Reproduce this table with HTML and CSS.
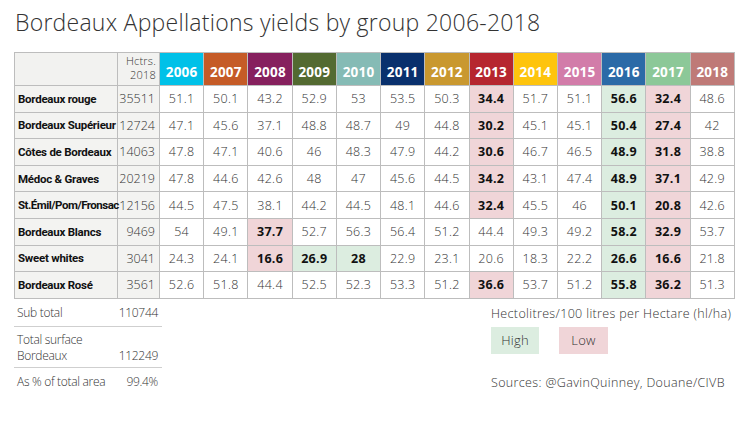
FILE: index.html
```html
<!DOCTYPE html>
<html>
<head>
<meta charset="utf-8">
<link rel="stylesheet" href="styles.css">
</head>
<body>
<div class="page">
  <h1 class="title">Bordeaux Appellations yields by group 2006-2018</h1>
  <table class="yields">
    <colgroup>
      <col class="c-name"><col class="c-ha">
      <col span="13" class="c-year">
    </colgroup>
    <thead>
      <tr>
        <th class="h-blank"></th>
        <th class="h-ha"><span class="hl">Hctrs.</span><span class="hl">2018</span></th>
        <th class="y06">2006</th><th class="y07">2007</th><th class="y08">2008</th><th class="y09">2009</th><th class="y10">2010</th><th class="y11">2011</th><th class="y12">2012</th><th class="y13">2013</th><th class="y14">2014</th><th class="y15">2015</th><th class="y16">2016</th><th class="y17">2017</th><th class="y18">2018</th>
      </tr>
    </thead>
    <tbody>
      <tr><td class="name">Bordeaux rouge</td><td class="ha">35511</td><td>51.1</td><td>50.1</td><td>43.2</td><td>52.9</td><td>53</td><td>53.5</td><td>50.3</td><td class="low">34.4</td><td>51.7</td><td>51.1</td><td class="high">56.6</td><td class="low">32.4</td><td>48.6</td></tr>
      <tr><td class="name">Bordeaux Supérieur</td><td class="ha">12724</td><td>47.1</td><td>45.6</td><td>37.1</td><td>48.8</td><td>48.7</td><td>49</td><td>44.8</td><td class="low">30.2</td><td>45.1</td><td>45.1</td><td class="high">50.4</td><td class="low">27.4</td><td>42</td></tr>
      <tr><td class="name">Côtes de Bordeaux</td><td class="ha">14063</td><td>47.8</td><td>47.1</td><td>40.6</td><td>46</td><td>48.3</td><td>47.9</td><td>44.2</td><td class="low">30.6</td><td>46.7</td><td>46.5</td><td class="high">48.9</td><td class="low">31.8</td><td>38.8</td></tr>
      <tr><td class="name">Médoc &amp; Graves</td><td class="ha">20219</td><td>47.8</td><td>44.6</td><td>42.6</td><td>48</td><td>47</td><td>45.6</td><td>44.5</td><td class="low">34.2</td><td>43.1</td><td>47.4</td><td class="high">48.9</td><td class="low">37.1</td><td>42.9</td></tr>
      <tr><td class="name narrow">St.Émil/Pom/Fronsac</td><td class="ha">12156</td><td>44.5</td><td>47.5</td><td>38.1</td><td>44.2</td><td>44.5</td><td>48.1</td><td>44.6</td><td class="low">32.4</td><td>45.5</td><td>46</td><td class="high">50.1</td><td class="low">20.8</td><td>42.6</td></tr>
      <tr><td class="name">Bordeaux Blancs</td><td class="ha">9469</td><td>54</td><td>49.1</td><td class="low">37.7</td><td>52.7</td><td>56.3</td><td>56.4</td><td>51.2</td><td>44.4</td><td>49.3</td><td>49.2</td><td class="high">58.2</td><td class="low">32.9</td><td>53.7</td></tr>
      <tr><td class="name">Sweet whites</td><td class="ha">3041</td><td>24.3</td><td>24.1</td><td class="low">16.6</td><td class="high">26.9</td><td class="high">28</td><td>22.9</td><td>23.1</td><td>20.6</td><td>18.3</td><td>22.2</td><td class="high">26.6</td><td class="low">16.6</td><td>21.8</td></tr>
      <tr><td class="name">Bordeaux Rosé</td><td class="ha">3561</td><td>52.6</td><td>51.8</td><td>44.4</td><td>52.5</td><td>52.3</td><td>53.3</td><td>51.2</td><td class="low">36.6</td><td>53.7</td><td>51.2</td><td class="high">55.8</td><td class="low">36.2</td><td>51.3</td></tr>
    </tbody>
  </table>
  <div class="bottom">
    <div class="totals">
      <div class="trow"><span>Sub total</span><span>110744</span></div>
      <div class="trow tall"><span class="two"><span class="tl">Total surface</span><span class="tl">Bordeaux</span></span><span>112249</span></div>
      <div class="trow last"><span>As % of total area</span><span>99.4%</span></div>
    </div>
    <div class="legend">
      <div class="unit">Hectolitres/100 litres per Hectare (hl/ha)</div>
      <div class="keys">
        <span class="key k-high">High</span>
        <span class="key k-low">Low</span>
      </div>
      <div class="sources">Sources: @GavinQuinney, Douane/CIVB</div>
    </div>
  </div>
</div>
</body>
</html>
```

FILE: styles.css
```css
html, body {
  margin: 0;
  padding: 0;
  background: #ffffff;
}
body {
  font-family: "Open Sans", "DejaVu Sans", sans-serif;
  color: #222;
}
.page {
  width: 750px;
  height: 422px;
  box-sizing: border-box;
  padding: 7px 16px 0 14px;
}
.title {
  margin: 0 0 0 1px;
  font-weight: 300;
  font-size: 23px;
  line-height: 31px;
  letter-spacing: 0.25px;
  color: #333;
  height: 45px;
}
.yields {
  border-collapse: collapse;
  table-layout: fixed;
  width: 720px;
  font-size: 12.5px;
}
.c-name { width: 103px; }
.c-ha { width: 42px; }
.c-year { width: 44.23px; }
.yields th, .yields td {
  border: 1px solid #bdbdbd;
  padding: 0;
}
.yields thead tr { height: 33px; }
.yields th {
  color: #fff;
  font-weight: 700;
  font-size: 13.5px;
  vertical-align: bottom;
  padding-bottom: 4px;
  text-align: center;
  letter-spacing: 0.2px;
}
.yields th.h-blank { background: #f2f2f0; }
.yields th.h-ha {
  background: #f2f2f0;
  color: #333;
  font-weight: 300;
  font-size: 11px;
  text-align: right;
  padding: 0 3px 3px 0;
}
.hl {
  display: block;
  line-height: 14px;
}
.y06 { background: #00c1e8; }
.y07 { background: #c55b27; }
.y08 { background: #86205e; }
.y09 { background: #536a31; }
.y10 { background: #85bbb5; }
.y11 { background: #09306d; }
.y12 { background: #c9982f; }
.y13 { background: #b6262f; }
.y14 { background: #fec40d; }
.y15 { background: #d27ca9; }
.y16 { background: #2b6aa7; }
.y17 { background: #8cc898; }
.y18 { background: #bf7a77; }
.yields tbody tr { height: 26.6px; }
.yields td {
  text-align: center;
  font-weight: 300;
  color: #333;
  letter-spacing: 0.3px;
}
.yields td.name {
  background: #f3f3f1;
  text-align: left;
  font-family: "Roboto", "Open Sans", sans-serif;
  font-weight: 700;
  font-size: 11.5px;
  letter-spacing: -0.25px;
  padding-left: 3px;
  color: #111;
  white-space: nowrap;
}
.yields td.name.narrow { letter-spacing: -0.5px; }
.yields td.ha {
  background: #f3f3f1;
  text-align: right;
  padding-right: 4px;
  letter-spacing: 0;
}
.yields td.low {
  background: #f0d5d8;
  font-weight: 700;
  color: #111;
}
.yields td.high {
  background: #dcede0;
  font-weight: 700;
  color: #111;
}
.bottom {
  display: flex;
  justify-content: space-between;
  font-size: 12.5px;
  font-weight: 300;
  color: #333;
}
.totals {
  width: 148px;
  letter-spacing: -0.3px;
  font-size: 12px;
}
.trow {
  display: flex;
  justify-content: space-between;
  align-items: flex-end;
  border-bottom: 1px solid #cfcfcf;
  padding: 6px 4px 5px 3px;
  line-height: 16px;
}
.trow.tall { padding-top: 5px; padding-bottom: 3px; }
.trow.last { border-bottom: none; }
.two { display: flex; flex-direction: column; }
.tl { display: block; line-height: 16px; }
.legend {
  width: 243px;
  padding-top: 7px;
  letter-spacing: 0.35px;
}
.unit { line-height: 16px; white-space: nowrap; }
.keys {
  display: flex;
  gap: 20px;
  margin-top: 5px;
  font-size: 13px;
  letter-spacing: 0.2px;
}
.key {
  display: flex;
  align-items: center;
  justify-content: center;
  height: 27px;
  width: 48px;
}
.k-high { background: #dcede0; }
.k-low { background: #f0d5d8; width: 49px; }
.sources {
  margin-top: 21px;
  line-height: 16px;
  white-space: nowrap;
}
```
